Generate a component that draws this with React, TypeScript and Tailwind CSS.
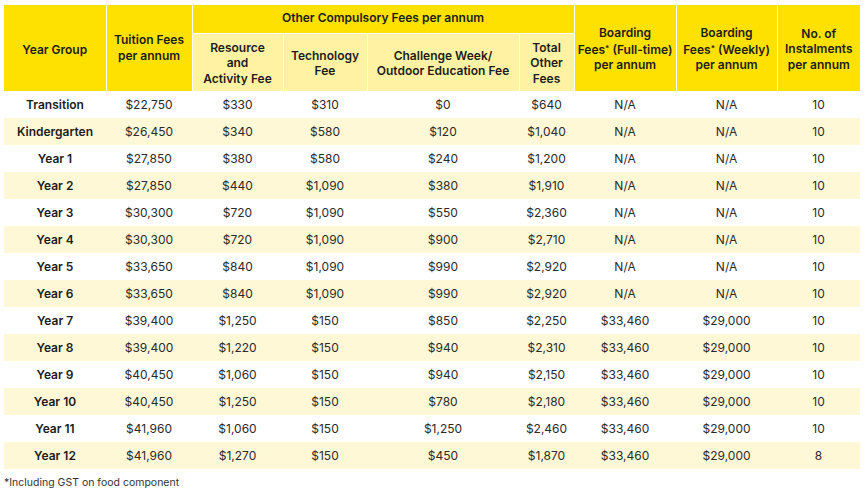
import React from "react";

const rows: string[][] = [
  ["Transition", "$22,750", "$330", "$310", "$0", "$640", "N/A", "N/A", "10"],
  ["Kindergarten", "$26,450", "$340", "$580", "$120", "$1,040", "N/A", "N/A", "10"],
  ["Year 1", "$27,850", "$380", "$580", "$240", "$1,200", "N/A", "N/A", "10"],
  ["Year 2", "$27,850", "$440", "$1,090", "$380", "$1,910", "N/A", "N/A", "10"],
  ["Year 3", "$30,300", "$720", "$1,090", "$550", "$2,360", "N/A", "N/A", "10"],
  ["Year 4", "$30,300", "$720", "$1,090", "$900", "$2,710", "N/A", "N/A", "10"],
  ["Year 5", "$33,650", "$840", "$1,090", "$990", "$2,920", "N/A", "N/A", "10"],
  ["Year 6", "$33,650", "$840", "$1,090", "$990", "$2,920", "N/A", "N/A", "10"],
  ["Year 7", "$39,400", "$1,250", "$150", "$850", "$2,250", "$33,460", "$29,000", "10"],
  ["Year 8", "$39,400", "$1,220", "$150", "$940", "$2,310", "$33,460", "$29,000", "10"],
  ["Year 9", "$40,450", "$1,060", "$150", "$940", "$2,150", "$33,460", "$29,000", "10"],
  ["Year 10", "$40,450", "$1,250", "$150", "$780", "$2,180", "$33,460", "$29,000", "10"],
  ["Year 11", "$41,960", "$1,060", "$150", "$1,250", "$2,460", "$33,460", "$29,000", "10"],
  ["Year 12", "$41,960", "$1,270", "$150", "$450", "$1,870", "$33,460", "$29,000", "8"],
];

const Star = () => <span className="text-[8px] align-[3px]">*</span>;

export default function App() {
  return (
    <div
      className="w-[865px] h-[492px] bg-white pl-[4px] pt-[5px] text-[#222]"
      style={{ fontFamily: "Inter, 'Liberation Sans', sans-serif" }}
    >
      <table className="table-fixed border-collapse w-[856px] text-[12px] leading-[15.5px] text-center">
        <colgroup>
          <col className="w-[102px]" />
          <col className="w-[86px]" />
          <col className="w-[91px]" />
          <col className="w-[84px]" />
          <col className="w-[152px]" />
          <col className="w-[55px]" />
          <col className="w-[102px]" />
          <col className="w-[101px]" />
          <col className="w-[83px]" />
        </colgroup>
        <thead className="font-semibold text-[#1c1c1c]">
          <tr className="h-[28px]">
            <th rowSpan={2} className="bg-[#ffe100] border border-white border-t-0 border-l-0 font-semibold pt-[3px]">
              Year Group
            </th>
            <th rowSpan={2} className="bg-[#ffe100] border border-white border-t-0 font-semibold">
              Tuition Fees
              <br />
              per annum
            </th>
            <th colSpan={4} className="bg-[#ffe100] border border-white border-t-0 font-semibold pb-[2px]">
              Other Compulsory Fees per annum
            </th>
            <th rowSpan={2} className="bg-[#ffe100] border border-white border-t-0 font-semibold pt-[2px]">
              Boarding
              <br />
              Fees<Star /> (Full-time)
              <br />
              per annum
            </th>
            <th rowSpan={2} className="bg-[#ffe100] border border-white border-t-0 font-semibold pt-[2px]">
              Boarding
              <br />
              Fees<Star /> (Weekly)
              <br />
              per annum
            </th>
            <th rowSpan={2} className="bg-[#ffe100] border border-white border-t-0 border-r-0 font-semibold pt-[2px]">
              No. of
              <br />
              Instalments
              <br />
              per annum
            </th>
          </tr>
          <tr className="h-[58px]">
            <th className="bg-[#fff3a3] border border-white font-semibold pt-[2px]">
              Resource
              <br />
              and
              <br />
              Activity Fee
            </th>
            <th className="bg-[#fff3a3] border border-white font-semibold pt-[2px]">
              Technology
              <br />
              Fee
            </th>
            <th className="bg-[#fff3a3] border border-white font-semibold pt-[2px]">
              Challenge Week/
              <br />
              Outdoor Education Fee
            </th>
            <th className="bg-[#fff3a3] border border-white font-semibold pt-[2px]">
              Total
              <br />
              Other
              <br />
              Fees
            </th>
          </tr>
        </thead>
        <tbody>
          {rows.map((r, i) => (
            <tr key={r[0]} className={`h-[27px] ${i % 2 === 1 ? "bg-[#fff8d6]" : "bg-white"}`}>
              {r.map((c, j) => (
                <td key={j} className={j === 0 ? "font-semibold text-[#1c1c1c]" : "text-[#2a2a2a]"}>
                  {c}
                </td>
              ))}
            </tr>
          ))}
        </tbody>
      </table>
      <div className="mt-[6px] text-[10.5px] text-[#333]">*Including GST on food component</div>
    </div>
  );
}
